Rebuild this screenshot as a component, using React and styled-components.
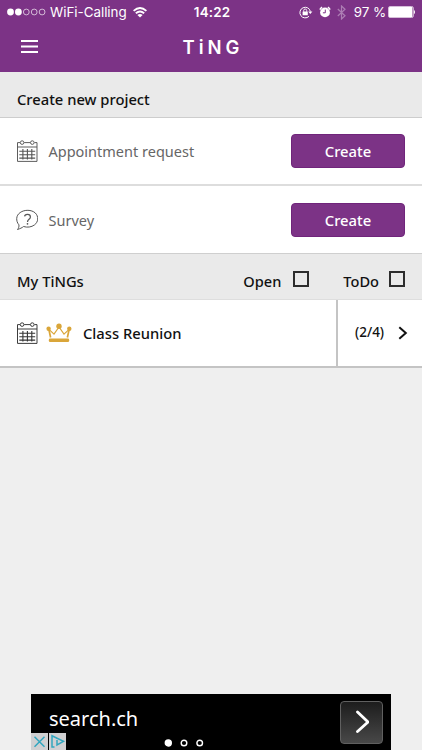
import React from "react";
import styled, { createGlobalStyle } from "styled-components";

const Global = createGlobalStyle`
  * { box-sizing: border-box; }
  body { margin: 0; background: #efefef; overflow: hidden; }
  svg { display: block; flex: none; }
`;

const Screen = styled.main`
  width: 422px;
  height: 750px;
  display: flex;
  flex-direction: column;
  background: #efefef;
  font-family: "Noto Sans", "Open Sans", sans-serif;
  color: #111;
  overflow: hidden;
`;

const Header = styled.header`
  flex: none;
  height: 72px;
  background: #7c3386;
  color: #fff;
`;

const StatusBar = styled.div`
  height: 24px;
  display: grid;
  grid-template-columns: 1fr auto 1fr;
  align-items: center;
  font: 400 13.4px/24px Inter, sans-serif;
`;

const StatusSide = styled.div`
  display: flex;
  align-items: center;
  height: 24px;
  white-space: nowrap;
`;

const Left = styled(StatusSide)`
  padding-left: 7px;
`;

const Right = styled(StatusSide)`
  justify-content: flex-end;
  padding-right: 6px;
`;

const Carrier = styled.span`
  width: 79px;
  margin-left: 4px;
  letter-spacing: -0.02px;
`;

const WifiSlot = styled.span`
  margin-left: 4px;
`;

const Clock = styled.span`
  padding-left: 2px;
  font-weight: 600;
  font-size: 13.4px;
  letter-spacing: 0.15px;
`;

const IconGroup = styled.span`
  display: flex;
  align-items: center;
  gap: 6px;
`;

const Percent = styled.span`
  margin: 0 2px 0 8px;
  font-size: 13.4px;
  letter-spacing: -0.1px;
`;

const NavBar = styled.div`
  height: 46px;
  display: grid;
  grid-template-columns: 1fr auto 1fr;
  align-items: center;
`;

const MenuButton = styled.button`
  border: 0;
  margin-top: -2px;
  padding: 0 0 0 21px;
  background: none;
  color: #fff;
`;

const Brand = styled.h1`
  margin: 0 -4px 0 0;
  font: 600 18.5px/46px Inter, sans-serif;
  letter-spacing: 4px;
`;

const SectionBar = styled.div`
  flex: none;
  height: 46px;
  display: flex;
  align-items: center;
  padding: ${(p) => (p.$filters ? "9px 17px 0 17px" : "9px 18px 0 17px")};
  background: #eaeaea;
  border-bottom: 1px solid ${(p) => (p.$filters ? "#dedede" : "#cdcdcd")};
`;

const SectionTitle = styled.h2`
  margin: 0;
  flex: 1;
  font-size: 14.75px;
  line-height: 20px;
  font-weight: 500;
`;

const Filter = styled.label`
  display: flex;
  align-items: center;
  margin-left: ${(p) => p.$gap || "0"};
  font-size: 14.6px;
  line-height: 20px;
  font-weight: 500;
`;

const Box = styled.span`
  width: 16px;
  height: 16px;
  margin: -4px 0 0 ${(p) => p.$gap};
  border: 2px solid #2d2d2d;
`;

const ActionRow = styled.div`
  flex: none;
  height: 68px;
  display: flex;
  align-items: center;
  padding: 0 17px 0 16px;
  background: #fff;
  border-bottom: ${(p) => (p.$last ? "1px solid #cfcfcf" : "2px solid #dddddd")};
`;

const ActionLabel = styled.span`
  flex: 1;
  margin-left: 10.5px;
  font-size: 14.5px;
  line-height: 22px;
  color: #666;
`;

const CreateButton = styled.button`
  width: 114px;
  height: 34px;
  border: 1px solid #70257b;
  border-radius: 4px;
  padding: 0;
  background: #7c3386;
  color: #fff;
  font: 500 14.8px/32px "Noto Sans", "Open Sans", sans-serif;
`;

const ProjectRow = styled.div`
  flex: none;
  height: 68px;
  display: flex;
  background: #fff;
  border-bottom: 2px solid #c4c4c4;
`;

const ProjectMain = styled.div`
  flex: 1;
  display: flex;
  align-items: center;
  padding-left: 16px;
`;

const CrownSlot = styled.span`
  margin-left: 8px;
`;

const ProjectName = styled.span`
  margin-left: 11px;
  font-size: 14.75px;
  font-weight: 500;
  line-height: 22px;
`;

const ProjectStatus = styled.div`
  width: 86px;
  display: flex;
  align-items: center;
  padding-left: 17px;
  border-left: 2px solid #c4c4c4;
  font-size: 13.5px;
  font-weight: 500;
`;

const Count = styled.span`
  width: 43px;
  margin-top: -2px;
`;

const Spacer = styled.div`
  flex: 1;
`;

const Ad = styled.aside`
  position: relative;
  flex: none;
  width: 360px;
  height: 56px;
  margin-left: 31px;
  padding: 0 8px 0 18px;
  display: flex;
  align-items: center;
  justify-content: space-between;
  background: #000;
  color: #fff;
`;

const AdTitle = styled.span`
  margin-top: -6px;
  font: 400 20px/28px "Noto Sans", "Open Sans", sans-serif;
`;

const AdButton = styled.span`
  width: 43px;
  height: 43px;
  display: grid;
  place-items: center;
  border: 1px solid #606060;
  border-radius: 4px;
  background: linear-gradient(#1d1d1d, #484848);
`;

const AdBadges = styled.div`
  position: absolute;
  left: 0;
  bottom: 0;
  display: flex;
  gap: 1px;
`;

const Badge = styled.span`
  width: 17px;
  height: 17px;
  background: #d0d0d2;
`;

const Pager = styled.svg`
  position: absolute;
  left: 133px;
  bottom: 3px;
`;

const SignalDots = () => (
  <svg width="39" height="8" viewBox="0 0 39 8">
    {[3.5, 11.4, 19.3, 27.2, 35.1].map((x, i) => (
      <circle key={x} cx={x} cy="4" r={i < 2 ? 3.4 : 2.9} fill={i < 2 ? "#fff" : "none"} stroke={i < 2 ? "none" : "#dcc8df"} strokeWidth="0.9" />
    ))}
  </svg>
);

const Wifi = () => (
  <svg width="14" height="11" viewBox="0 0 14 11" fill="none" stroke="#fff" strokeWidth="1.8">
    <path d="M.6 3.9Q7-1.9 13.4 3.9M2.8 6.3Q7 2.8 11.2 6.3" />
    <path d="M4.4 7.9Q7 5.9 9.6 7.9L7 10.6Z" fill="#fff" stroke="none" />
  </svg>
);

const RotationLock = () => (
  <svg width="14" height="13" viewBox="0 0 14 13" fill="none" stroke="#fff">
    <path d="M10 10.3A5.3 5.3 0 1 1 11.4 5.5" strokeWidth="1" />
    <path d="M9.2 5.5H13.4L11.3 8Z" fill="#fff" stroke="none" />
    <rect x="3.6" y="5.4" width="5.2" height="3.9" rx=".4" fill="#fff" stroke="none" />
    <path d="M4.7 5.8V4.5a1.5 1.5 0 0 1 3 0V5.8" strokeWidth=".9" />
  </svg>
);

const Alarm = () => (
  <svg width="12" height="12" viewBox="0 0 12 12">
    <circle cx="6" cy="6.4" r="4.9" fill="#fff" />
    <path d="M.9 3.6A6 6 0 0 1 3.1 1.2M8.9 1.2a6 6 0 0 1 2.2 2.4" stroke="#fff" strokeWidth="1.5" fill="none" />
    <path d="M6.3 3.6V6.8H3.9" stroke="#7c3386" strokeWidth="1" fill="none" />
  </svg>
);

const Bluetooth = () => (
  <svg width="9" height="15" viewBox="0 0 9 15">
    <path d="M.8 4 8 10.7 4.5 14V1L8 4.3.8 11" fill="none" stroke="#ad7eb4" strokeWidth="1.2" />
  </svg>
);

const Battery = () => (
  <svg width="28" height="12" viewBox="0 0 28 12">
    <rect x=".5" y=".5" width="24.8" height="11" rx="1.5" fill="none" stroke="#d6bed9" />
    <rect x="1" y="1" width="23.4" height="10" rx=".6" fill="#fff" />
    <path d="M26 3.7q2 2.3 0 4.6z" fill="#fff" />
  </svg>
);

const Calendar = ({ color = "#555" }) => (
  <svg width="22" height="22" viewBox="0 0 22 22" fill="none" stroke={color} strokeWidth=".95">
    <path d="M4 2.6H1.5V21.4H21V2.6H18.5M8.2 2.6H14.2M1.5 7H21" />
    <circle cx="6.1" cy="2.6" r="1.8" />
    <circle cx="16.3" cy="2.6" r="1.8" />
    <path d="M6.9 9V19.4M11.4 9V19.4M15.8 9V19.4M3.3 11.3H19.2M3.3 14.8H19.2M3.3 18.1H19.2" strokeWidth="1.1" />
  </svg>
);

const Question = () => (
  <svg width="22" height="22" viewBox="0 0 22 22" fill="none" stroke="#555" strokeWidth="1">
    <path d="M2.9 15.8C-.3 12.1-.1 6.4 4.1 3.6 8.5.4 15.5.6 19.2 3.9c3.7 3.5 3.2 9.1-.7 12-3 2.3-7.4 2.8-10.9 1.6-1.7 1.4-3.3 2-6.1 3 1.2-1.4 1.7-3 1.4-4.7Z" />
    <path d="M8.6 7.4C8.8 4.6 14.4 4.4 14.4 7.9c0 2.4-2.9 2.3-2.9 5" strokeWidth="1.2" />
    <circle cx="11.5" cy="14.8" r=".85" fill="#555" stroke="none" />
  </svg>
);

const Crown = () => (
  <svg width="26" height="20" viewBox="0 0 26 20" fill="#daa63a">
    <circle cx="2.6" cy="5.8" r="2.2" />
    <circle cx="13" cy="3.2" r="2.7" />
    <circle cx="23.3" cy="5.8" r="2.2" />
    <path d="M2.8 6 4.6 14.5M23.2 6 21.4 14.5" fill="none" stroke="#daa63a" strokeWidth="1.7" />
    <path d="M3 6.4 8 11.2 13 4 18 11.2 23.1 6.4" fill="none" stroke="#daa63a" strokeWidth="1.2" />
    <rect x="2.8" y="15.5" width="20.4" height="3.6" rx="1.4" />
  </svg>
);

export default function App() {
  return (
    <Screen>
      <Global />
      <Header>
        <StatusBar>
          <Left>
            <SignalDots />
            <Carrier>WiFi-Calling</Carrier>
            <WifiSlot>
              <Wifi />
            </WifiSlot>
          </Left>
          <Clock>14:22</Clock>
          <Right>
            <IconGroup>
              <RotationLock />
              <Alarm />
              <Bluetooth />
            </IconGroup>
            <Percent>97 %</Percent>
            <Battery />
          </Right>
        </StatusBar>
        <NavBar>
          <MenuButton aria-label="Menu">
            <svg width="17" height="13" viewBox="0 0 17 13" stroke="#fff" strokeWidth="1.8">
              <path d="M0 1H17M0 6.5H17M0 12H17" />
            </svg>
          </MenuButton>
          <Brand>TiNG</Brand>
        </NavBar>
      </Header>

      <SectionBar>
        <SectionTitle>Create new project</SectionTitle>
      </SectionBar>
      <ActionRow>
        <Calendar />
        <ActionLabel>Appointment request</ActionLabel>
        <CreateButton>Create</CreateButton>
      </ActionRow>
      <ActionRow $last>
        <Question />
        <ActionLabel>Survey</ActionLabel>
        <CreateButton>Create</CreateButton>
      </ActionRow>

      <SectionBar $filters>
        <SectionTitle>My TiNGs</SectionTitle>
        <Filter>
          Open
          <Box $gap="12px" />
        </Filter>
        <Filter $gap="34px">
          ToDo
          <Box $gap="10px" />
        </Filter>
      </SectionBar>
      <ProjectRow>
        <ProjectMain>
          <Calendar color="#333" />
          <CrownSlot>
            <Crown />
          </CrownSlot>
          <ProjectName>Class Reunion</ProjectName>
        </ProjectMain>
        <ProjectStatus>
          <Count>(2/4)</Count>
          <svg width="10" height="14" viewBox="0 0 10 14" fill="none" stroke="#111" strokeWidth="2">
            <path d="M1.3 1.2 7.8 7 1.3 12.8" />
          </svg>
        </ProjectStatus>
      </ProjectRow>

      <Spacer />
      <Ad>
        <AdTitle>search.ch</AdTitle>
        <AdButton>
          <svg width="14" height="24" viewBox="0 0 14 24" fill="none" stroke="#fff" strokeWidth="2.8" strokeLinecap="round">
            <path d="M2.5 2 13 12 2.5 21.5" />
          </svg>
        </AdButton>
        <AdBadges>
          <Badge>
            <svg width="17" height="17" viewBox="0 0 17 17" stroke="#32a6bf" strokeWidth="1.5">
              <path d="M3.5 3.8 13.5 13.8M13.5 3.8 3.5 13.8" />
            </svg>
          </Badge>
          <Badge>
            <svg width="17" height="17" viewBox="0 0 17 17" fill="none" stroke="#32a6bf" strokeWidth="1.5">
              <path d="M5.5 14H3V2.8L14.5 8.4 8 12V7M8 4.8V6" />
            </svg>
          </Badge>
        </AdBadges>
        <Pager width="40" height="8" viewBox="0 0 40 8" fill="none" stroke="#fff" strokeWidth="1.4">
          <circle cx="4.3" cy="4" r="3" fill="#fff" />
          <circle cx="20" cy="4" r="2.8" />
          <circle cx="35.7" cy="4" r="2.8" />
        </Pager>
      </Ad>
    </Screen>
  );
}
